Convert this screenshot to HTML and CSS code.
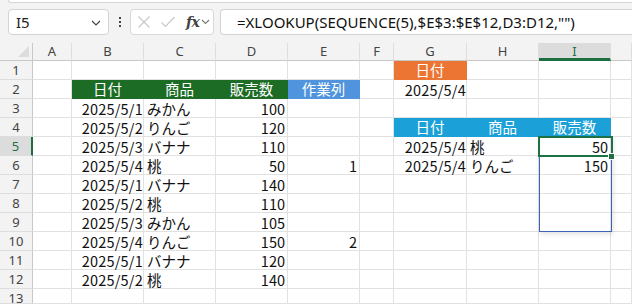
FILE: index.html
```html
<!DOCTYPE html>
<html lang="ja">
<head>
<meta charset="utf-8">
<link rel="stylesheet" href="styles.css">
</head>
<body>
<div class="app">
  <div class="topstrip"></div>
  <div class="fbar">
    <div class="namebox"><span class="nb-text">I5</span>
      <svg class="chev" width="10" height="6" viewBox="0 0 10 6"><path d="M1 1 L5 5 L9 1" fill="none" stroke="#444" stroke-width="1.2"/></svg>
    </div>
    <div class="dots"><span></span><span></span><span></span></div>
    <div class="fxbox">
      <svg class="ic" width="14" height="14" viewBox="0 0 14 14"><path d="M1.5 1.5 L12.5 12.5 M12.5 1.5 L1.5 12.5" stroke="#c8c8c8" stroke-width="1.2" fill="none"/></svg>
      <svg class="ic" width="16" height="14" viewBox="0 0 16 14"><path d="M1.5 7.5 L5.5 11.5 L14.5 2" stroke="#c8c8c8" stroke-width="1.2" fill="none"/></svg>
      <span class="fx">fx</span>
      <svg class="chev2" width="9" height="6" viewBox="0 0 9 6"><path d="M1 1 L4.5 4.5 L8 1" fill="none" stroke="#777" stroke-width="1.1"/></svg>
    </div>
    <div class="formula">=XLOOKUP(SEQUENCE(5),$E$3:$E$12,D3:D12,"")</div>
  </div>
  <div class="sheet">
    <div class="grid">
      <div class="corner"><span class="tri"></span></div><div class="ch">A</div><div class="ch">B</div><div class="ch">C</div><div class="ch">D</div><div class="ch">E</div><div class="ch">F</div><div class="ch">G</div><div class="ch">H</div><div class="ch sel-col">I</div><div class="ch"></div>

      <div class="rh">1</div><div class="c"></div><div class="c"></div><div class="c"></div><div class="c"></div><div class="c"></div><div class="c"></div><div class="c hd orange">日付</div><div class="c"></div><div class="c"></div><div class="c"></div>

      <div class="rh">2</div><div class="c"></div><div class="c hd green">日付</div><div class="c hd green">商品</div><div class="c hd green">販売数</div><div class="c hd blue">作業列</div><div class="c"></div><div class="c r">2025/5/4</div><div class="c"></div><div class="c"></div><div class="c"></div>

      <div class="rh">3</div><div class="c"></div><div class="c r">2025/5/1</div><div class="c l">みかん</div><div class="c n">100</div><div class="c"></div><div class="c"></div><div class="c"></div><div class="c"></div><div class="c"></div><div class="c"></div>

      <div class="rh">4</div><div class="c"></div><div class="c r">2025/5/2</div><div class="c l">りんご</div><div class="c n">120</div><div class="c"></div><div class="c"></div><div class="c hd cyan">日付</div><div class="c hd cyan">商品</div><div class="c hd cyan">販売数</div><div class="c"></div>

      <div class="rh sel-row">5</div><div class="c"></div><div class="c r">2025/5/3</div><div class="c l">バナナ</div><div class="c n">110</div><div class="c"></div><div class="c"></div><div class="c r">2025/5/4</div><div class="c l">桃</div><div class="c n">50</div><div class="c"></div>

      <div class="rh">6</div><div class="c"></div><div class="c r">2025/5/4</div><div class="c l">桃</div><div class="c n">50</div><div class="c n">1</div><div class="c"></div><div class="c r">2025/5/4</div><div class="c l">りんご</div><div class="c n">150</div><div class="c"></div>

      <div class="rh">7</div><div class="c"></div><div class="c r">2025/5/1</div><div class="c l">バナナ</div><div class="c n">140</div><div class="c"></div><div class="c"></div><div class="c"></div><div class="c"></div><div class="c"></div><div class="c"></div>

      <div class="rh">8</div><div class="c"></div><div class="c r">2025/5/2</div><div class="c l">桃</div><div class="c n">110</div><div class="c"></div><div class="c"></div><div class="c"></div><div class="c"></div><div class="c"></div><div class="c"></div>

      <div class="rh">9</div><div class="c"></div><div class="c r">2025/5/3</div><div class="c l">みかん</div><div class="c n">105</div><div class="c"></div><div class="c"></div><div class="c"></div><div class="c"></div><div class="c"></div><div class="c"></div>

      <div class="rh">10</div><div class="c"></div><div class="c r">2025/5/4</div><div class="c l">りんご</div><div class="c n">150</div><div class="c n">2</div><div class="c"></div><div class="c"></div><div class="c"></div><div class="c"></div><div class="c"></div>

      <div class="rh">11</div><div class="c"></div><div class="c r">2025/5/1</div><div class="c l">バナナ</div><div class="c n">120</div><div class="c"></div><div class="c"></div><div class="c"></div><div class="c"></div><div class="c"></div><div class="c"></div>

      <div class="rh">12</div><div class="c"></div><div class="c r">2025/5/2</div><div class="c l">桃</div><div class="c n">140</div><div class="c"></div><div class="c"></div><div class="c"></div><div class="c"></div><div class="c"></div><div class="c"></div>

      <div class="rh">13</div><div class="c"></div><div class="c"></div><div class="c"></div><div class="c"></div><div class="c"></div><div class="c"></div><div class="c"></div><div class="c"></div><div class="c"></div><div class="c"></div>
    </div>
    <div class="range"></div>
    <div class="active"></div>
    <div class="handle"></div>
  </div>
</div>
</body>
</html>
```

FILE: styles.css
```css
* { box-sizing: border-box; }
html, body { margin: 0; padding: 0; }
body {
  width: 632px;
  height: 304px;
  overflow: hidden;
  background: #f3f3f3;
  font-family: "Noto Sans CJK JP", "Noto Sans", sans-serif;
}
.app { display: flex; flex-direction: column; }
.topstrip {
  height: 3px;
  margin-left: 8px;
  background: #ffffff;
  border: 1px solid #d6d6d6;
  border-top: none;
  border-right: none;
  border-radius: 0 0 0 6px;
}
.fbar {
  height: 40px;
  display: flex;
  align-items: flex-start;
  padding: 6px 0 0 8px;
}
.namebox {
  width: 101px;
  height: 26px;
  background: #fff;
  border: 1px solid #d3d3d3;
  border-radius: 4px;
  display: flex;
  align-items: center;
  justify-content: space-between;
  padding: 0 7px 0 7px;
}
.nb-text { font-size: 15px; color: #222; font-family: "Noto Sans", sans-serif; }
.chev { margin-top: 1px; }
.dots {
  width: 21px;
  height: 26px;
  display: flex;
  flex-direction: column;
  align-items: center;
  justify-content: center;
  gap: 2px;
}
.dots span { width: 2px; height: 2px; background: #444; display: block; }
.fxbox {
  width: 84px;
  height: 26px;
  background: #fff;
  border: 1px solid #d8d8d8;
  border-radius: 4px;
  display: flex;
  align-items: center;
  padding: 0 0 0 6px;
  gap: 9px;
}
.fx {
  font-family: "DejaVu Serif", "Liberation Serif", serif;
  font-style: italic;
  font-weight: bold;
  font-size: 14px;
  color: #444;
  letter-spacing: -0.5px;
  margin-left: 1px;
}
.chev2 { margin-left: -7px; }
.formula {
  margin-left: 6px;
  flex: 1;
  height: 26px;
  background: #fff;
  border: 1px solid #d3d3d3;
  border-right: none;
  border-radius: 4px 0 0 4px;
  padding-left: 16px;
  font-size: 15px;
  line-height: 24px;
  color: #111;
  white-space: nowrap;
  font-family: "Noto Sans", sans-serif;
}
.sheet { position: relative; background: #fff; }
.grid {
  display: grid;
  grid-template-columns: 33px 39px 72px 72px 72px 72px 34px 73px 72px 72px 21px;
  grid-template-rows: 18px repeat(12, 19px) 15px;
}
.corner {
  background: #f3f3f3;
  border-right: 1px solid #c8c8c8;
  border-bottom: 1px solid #c8c8c8;
  position: relative;
}
.tri {
  position: absolute;
  right: 3px;
  bottom: 3px;
  width: 0; height: 0;
  border-left: 11px solid transparent;
  border-bottom: 11px solid #dcdcdc;
}
.ch {
  background: #f3f3f3;
  border-right: 1px solid #dedede;
  border-bottom: 1px solid #c8c8c8;
  font-family: "Noto Sans", sans-serif;
  font-size: 13px;
  color: #444;
  text-align: center;
  line-height: 17px;
}
.ch.sel-col {
  background: #dcdcdc;
  color: #1d7145;
  border-bottom: 3px solid #1d6f42;
  line-height: 16px;
}
.rh {
  background: #f3f3f3;
  border-right: 1px solid #c8c8c8;
  border-bottom: 1px solid #dedede;
  font-family: "Noto Sans", sans-serif;
  font-size: 13px;
  color: #444;
  text-align: center;
  line-height: 18px;
}
.rh.sel-row {
  background: #dcdcdc;
  color: #1d7145;
  border-right: 2px solid #1d6f42;
}
.c {
  border-right: 1px solid #e1e1e1;
  border-bottom: 1px solid #e1e1e1;
  font-size: 14.5px;
  line-height: 18px;
  padding-top: 1px;
  color: #111;
  white-space: nowrap;
  overflow: visible;
}
.c.r { text-align: right; padding-right: 0; letter-spacing: 0.2px; }
.c.l { text-align: left; padding-left: 3px; }
.c.n { text-align: right; padding-right: 2px; }
.c.hd { text-align: center; color: #fff; padding-top: 0; }
.green { background: #1d6c25; border-color: #1d6c25 !important; }
.blue { background: #4f94dc; border-color: #4f94dc !important; }
.orange { background: #ec7533; border-color: #ec7533 !important; }
.cyan { background: #1ba1d8; border-color: #1ba1d8 !important; }
.range {
  position: absolute;
  left: 539px;
  top: 93px;
  width: 73px;
  height: 96px;
  border: 1px solid #3c63b6;
  box-shadow: 1px 2px 5px rgba(0,0,0,0.12);
}
.active {
  position: absolute;
  left: 538px;
  top: 93px;
  width: 75px;
  height: 21px;
  border: 2px solid #1e7145;
}
.handle {
  position: absolute;
  left: 608px;
  top: 110px;
  width: 7px;
  height: 7px;
  background: #1e7145;
  border: 1px solid #fff;
}
```
